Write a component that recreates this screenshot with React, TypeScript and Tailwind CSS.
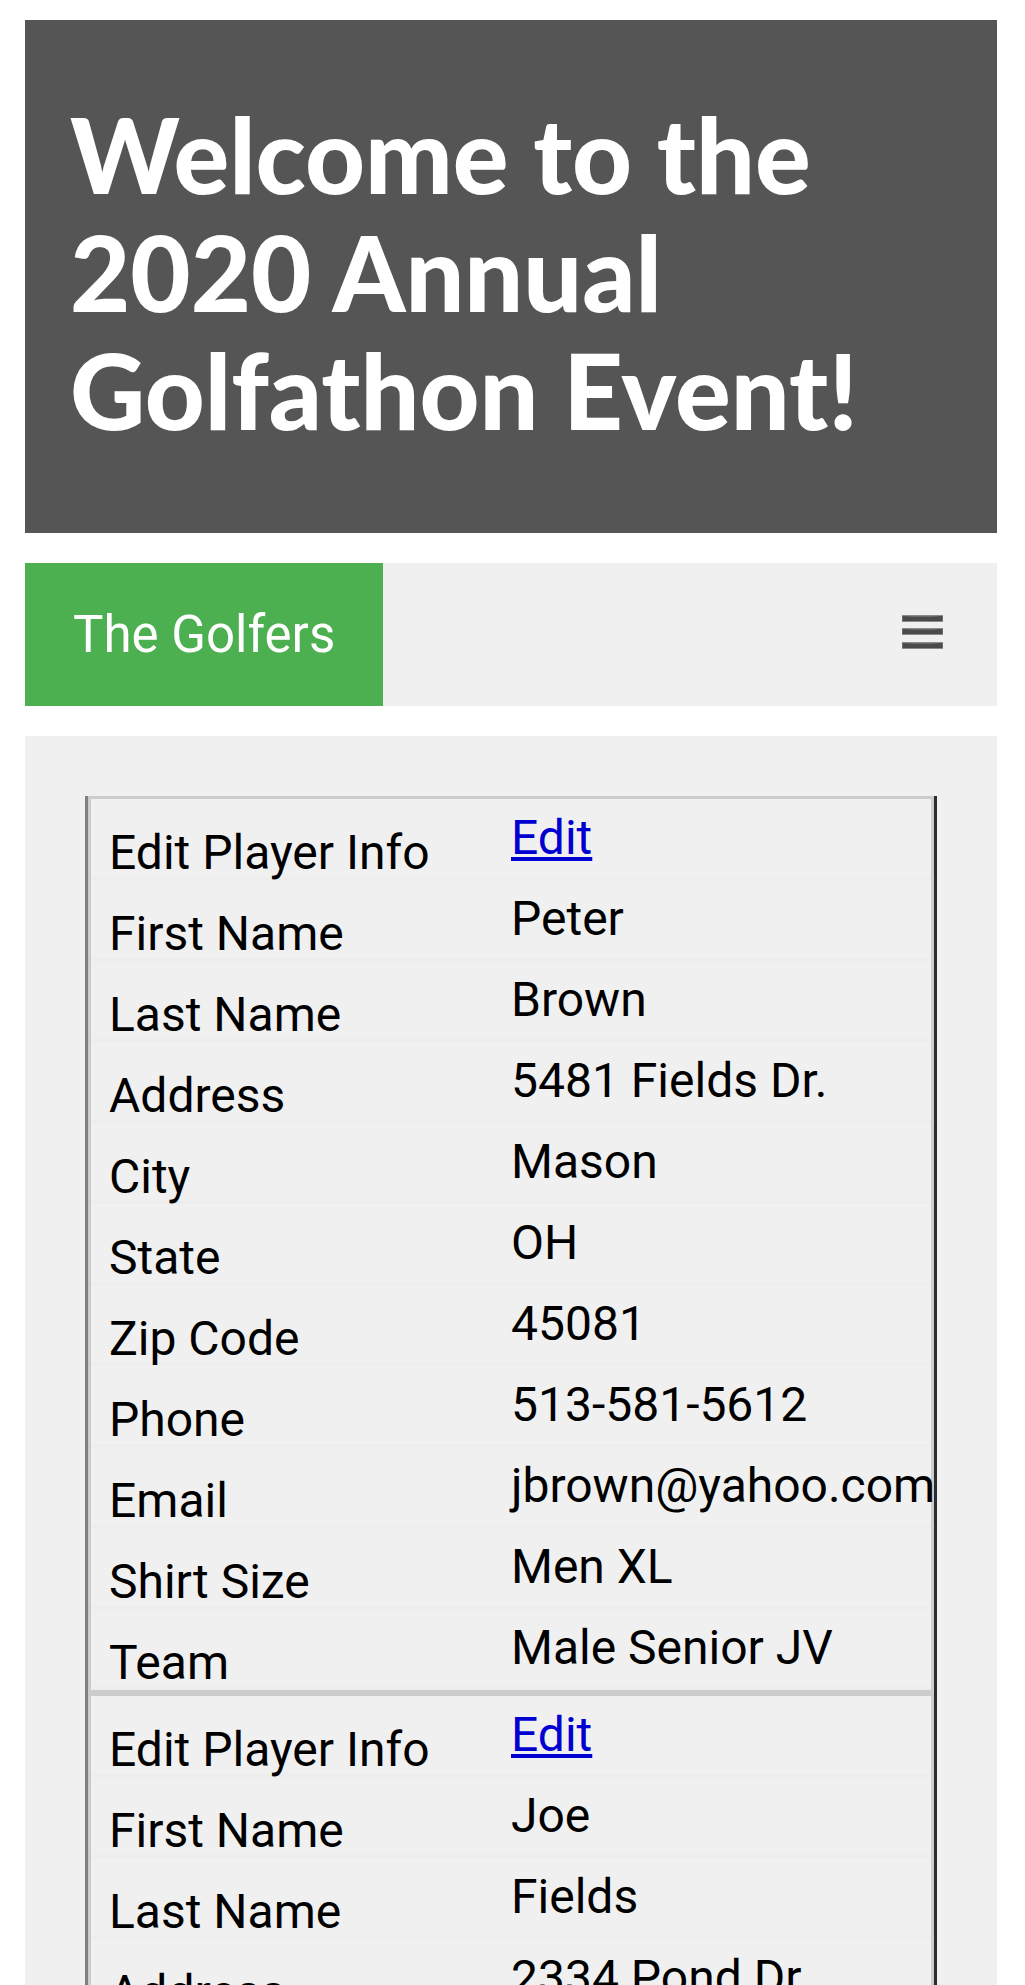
import type { ReactNode } from "react";

type Player = {
  id: string;
  fields: { label: string; value: string }[];
};

const players: Player[] = [
  {
    id: "peter-brown",
    fields: [
      { label: "First Name", value: "Peter" },
      { label: "Last Name", value: "Brown" },
      { label: "Address", value: "5481 Fields Dr." },
      { label: "City", value: "Mason" },
      { label: "State", value: "OH" },
      { label: "Zip Code", value: "45081" },
      { label: "Phone", value: "513-581-5612" },
      { label: "Email", value: "jbrown@yahoo.com" },
      { label: "Shirt Size", value: "Men XL" },
      { label: "Team", value: "Male Senior JV" },
    ],
  },
  {
    id: "joe-fields",
    fields: [
      { label: "First Name", value: "Joe" },
      { label: "Last Name", value: "Fields" },
      { label: "Address", value: "2334 Pond Dr." },
    ],
  },
];

function MenuIcon() {
  return (
    <svg viewBox="0 0 41 34" className="h-[34px] w-[41px]" aria-hidden="true">
      {[0, 13, 27].map((y) => (
        <g key={y}>
          <rect x="0" y={y} width="41" height="7" fill="#8a8a8a" />
          <path d={`M0.5 ${y + 1} Q20 ${y + 2} 40.5 ${y + 1} V${y + 6} H0.5 Z`} fill="#4a4a4a" />
        </g>
      ))}
    </svg>
  );
}

function Row({ label, children }: { label: string; children: ReactNode }) {
  return (
    <tr>
      <th
        scope="row"
        className="border-b-[3px] border-[#ededed] pt-[30px] pl-[18px] text-left align-top font-normal whitespace-nowrap"
      >
        {label}
      </th>
      <td className="border-b-[3px] border-[#ededed] py-[15px] align-top whitespace-nowrap">{children}</td>
    </tr>
  );
}

function PlayerTable({ player }: { player: Player }) {
  return (
    <div className="border-[3px] border-[#ccc]">
      <table className="w-full table-fixed border-separate border-spacing-0 text-[48px] leading-[48px]">
        <tbody>
          <Row label="Edit Player Info">
            <a
              href={`#edit-${player.id}`}
              className="text-[#0000d0] underline decoration-4 underline-offset-[3px]"
            >
              Edit
            </a>
          </Row>
          {player.fields.map((field) => (
            <Row key={field.label} label={field.label}>
              {field.value}
            </Row>
          ))}
        </tbody>
      </table>
    </div>
  );
}

export default function App() {
  return (
    <div className="bg-white pt-5 pr-7 pl-[25px] font-['Roboto',sans-serif] text-black">
      <header className="bg-[#555] px-[45px] pt-[75px] pb-[84px]">
        <h1 className="font-['Lato',sans-serif] text-[104px] leading-[118px] font-black text-white">
          Welcome to the 2020 Annual Golfathon Event!
        </h1>
      </header>

      <nav className="mt-[30px] flex items-stretch justify-between bg-[#f0f0f0]">
        <a href="#golfers" className="bg-[#4caf50] px-12 py-[42px] text-[51px] leading-[59px] text-white">
          The Golfers
        </a>
        <button type="button" aria-label="Open menu" className="flex items-center px-[54px] pb-[5px]">
          <MenuIcon />
        </button>
      </nav>

      <main className="mt-[30px] bg-[#f0f0f0] p-[60px]">
        <div className="border-x-[3px] border-r-[#2c2c2c] border-l-[#808080]">
          {players.map((player) => (
            <PlayerTable key={player.id} player={player} />
          ))}
        </div>
      </main>
    </div>
  );
}
